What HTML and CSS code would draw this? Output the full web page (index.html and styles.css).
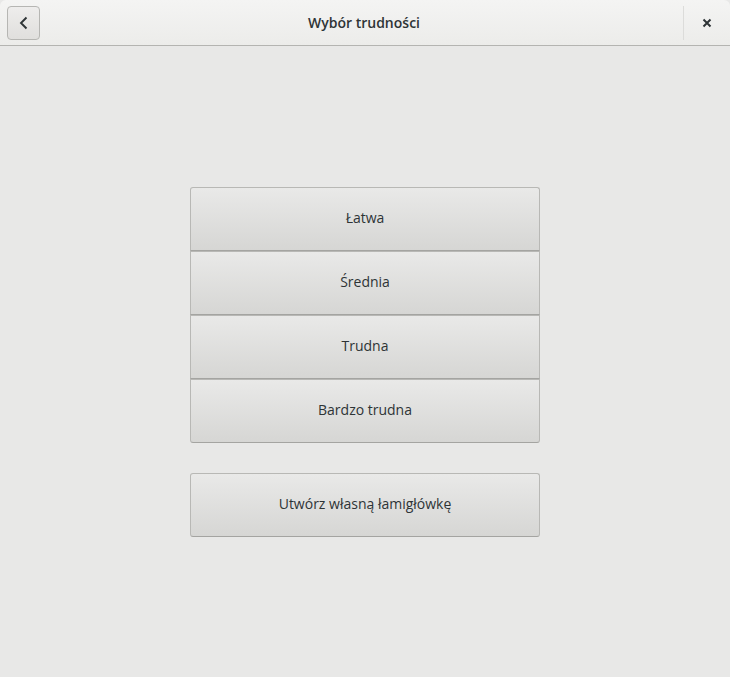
FILE: index.html
```html
<!DOCTYPE html>
<html lang="pl">
<head>
<meta charset="utf-8">
<title>Wybór trudności</title>
<link rel="stylesheet" href="styles.css">
</head>
<body>
<div class="window">
  <header class="headerbar">
    <button class="back" aria-label="Wstecz">
      <svg width="16" height="16" viewBox="0 0 16 16"><path d="M10.5 2.5 L5 8 L10.5 13.5" fill="none" stroke="#2e3436" stroke-width="1.9"/></svg>
    </button>
    <div class="title">Wybór trudności</div>
    <div class="sep"></div>
    <button class="close" aria-label="Zamknij">
      <svg width="10" height="10" viewBox="0 0 10 10"><path d="M1.5 1.5 L8.5 8.5 M8.5 1.5 L1.5 8.5" fill="none" stroke="#2e3436" stroke-width="2"/></svg>
    </button>
  </header>
  <main class="content">
    <div class="group">
      <button class="btn first">Łatwa</button>
      <button class="btn">Średnia</button>
      <button class="btn">Trudna</button>
      <button class="btn last">Bardzo trudna</button>
    </div>
    <button class="btn single">Utwórz własną łamigłówkę</button>
  </main>
</div>
</body>
</html>
```
FILE: styles.css
```css
html, body {
  margin: 0;
  padding: 0;
  height: 100%;
}
body {
  background: #e8e8e7;
  font-family: "Open Sans", "Noto Sans", sans-serif;
  color: #2e3436;
  font-size: 14px;
}
.window {
  display: flex;
  flex-direction: column;
  height: 100%;
}
.headerbar {
  box-sizing: border-box;
  height: 46px;
  display: flex;
  align-items: center;
  background: linear-gradient(#f4f4f3, #ececea);
  border-bottom: 1px solid #b4b4b1;
  border-radius: 6px 6px 0 0;
  padding: 0 0 0 7px;
}
.back {
  box-sizing: border-box;
  width: 33px;
  height: 34px;
  margin-top: 1px;
  border: 1px solid #b6b6b3;
  border-radius: 4px;
  background: linear-gradient(#eeedec, #e0dfdd);
  display: flex;
  align-items: center;
  justify-content: center;
  padding: 0;
}
.title {
  flex: 1;
  text-align: center;
  font-weight: 600;
  font-size: 14px;
  padding-left: 5px;
  padding-bottom: 1px;
  color: #2e3436;
}
.sep {
  width: 1px;
  height: 34px;
  margin-top: 1px;
  background: #dcdcda;
}
.close {
  width: 46px;
  height: 34px;
  border: none;
  background: transparent;
  display: flex;
  align-items: center;
  justify-content: center;
  padding: 0;
  margin-top: 1px;
}
.content {
  flex: 1;
  display: flex;
  flex-direction: column;
  align-items: center;
  padding-top: 141px;
  gap: 30px;
}
.group {
  display: flex;
  flex-direction: column;
  width: 350px;
}
.btn {
  box-sizing: border-box;
  width: 350px;
  height: 64px;
  font-family: inherit;
  font-size: 14px;
  color: #2e3436;
  border: 1px solid #b8b8b5;
  border-bottom-color: #a4a4a1;
  background: linear-gradient(#e9e9e8, #d6d6d4);
  border-radius: 0;
  padding: 0 0 3px 0;
}
.first { border-radius: 3px 3px 0 0; }
.last { border-radius: 0 0 3px 3px; }
.single { border-radius: 3px; }
```
